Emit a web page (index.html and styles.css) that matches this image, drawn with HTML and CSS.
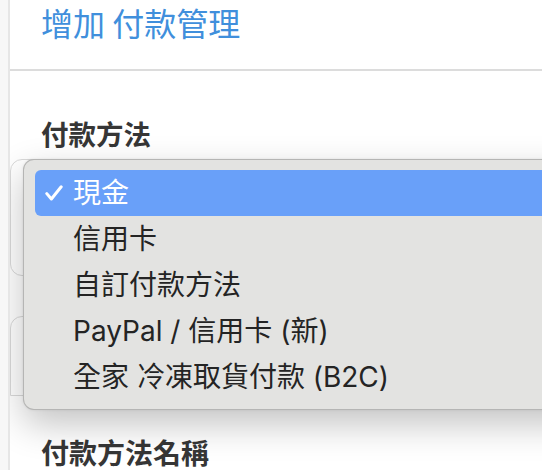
FILE: index.html
```html
<!DOCTYPE html>
<html lang="zh-Hant">
<head>
<meta charset="utf-8">
<title>增加 付款管理</title>
<link rel="stylesheet" href="styles.css">
</head>
<body>
<div class="panel">
  <div class="panel-head">
    <h1 class="title">增加 付款管理</h1>
  </div>
  <div class="panel-body">
    <div class="field-label">付款方法</div>
    <div class="box box-one"></div>
    <div class="box box-two"></div>
    <div class="field-label field-label-name">付款方法名稱</div>
  </div>
  <div class="menu">
    <div class="menu-item is-selected">
      <span class="check"><svg width="18" height="16" viewBox="0 0 18 16"><path d="M1.8 8.6 L6.4 14 L16.2 1.8" fill="none" stroke="#fff" stroke-width="3" stroke-linecap="round" stroke-linejoin="round"/></svg></span>
      <span class="label">現金</span>
    </div>
    <div class="menu-item"><span class="check"></span><span class="label">信用卡</span></div>
    <div class="menu-item"><span class="check"></span><span class="label">自訂付款方法</span></div>
    <div class="menu-item"><span class="check"></span><span class="label">PayPal / 信用卡 (新)</span></div>
    <div class="menu-item"><span class="check"></span><span class="label">全家 冷凍取貨付款 (B2C)</span></div>
  </div>
</div>
</body>
</html>
```

FILE: styles.css
```css
html, body {
  margin: 0;
  padding: 0;
  height: 470px;
  overflow: hidden;
}

body {
  background: #f7f7f7;
  font-family: Inter, "Noto Sans CJK TC", sans-serif;
}

.panel {
  position: relative;
  margin-left: 8px;
  border-left: 2px solid #e6e6e6;
  background: #ffffff;
  height: 470px;
  overflow: hidden;
}

.panel-head {
  height: 69px;
  border-bottom: 2px solid #dcdcdc;
  padding-left: 31px;
}

.title {
  margin: 0;
  font-family: "Noto Sans CJK TC", sans-serif;
  font-weight: 400;
  font-size: 32px;
  line-height: 44px;
  color: #408fdc;
}

.panel-body {
  display: flex;
  flex-direction: column;
}

.field-label {
  padding-left: 31px;
  margin-top: 44px;
  font-family: "Noto Sans CJK TC", sans-serif;
  font-weight: 700;
  font-size: 27.5px;
  line-height: 36px;
  color: #363636;
}

.box {
  border: 1px solid #dadada;
  margin-right: -40px;
}

.box-one {
  margin-top: 8px;
  height: 115px;
  border-radius: 12px;
}

.box-two {
  margin-top: 40px;
  height: 78px;
  border-radius: 12px 12px 0 0;
}

.field-label-name {
  margin-top: 38px;
  font-size: 28px;
}

.menu {
  position: absolute;
  left: 13px;
  top: 159px;
  width: 600px;
  height: 251px;
  box-sizing: border-box;
  padding: 10px 0 9px 11px;
  background: #e3e3e1;
  border: 1px solid rgba(0, 0, 0, 0.2);
  border-radius: 11px;
  box-shadow: 0 14px 36px rgba(0, 0, 0, 0.24), 0 0 3px rgba(0, 0, 0, 0.08);
}

.menu-item {
  display: flex;
  align-items: center;
  gap: 10px;
  height: 46px;
  padding-left: 10px;
  border-radius: 6px 0 0 6px;
  font-size: 28px;
  color: #242424;
}

.menu-item.is-selected {
  background: #69a0f9;
  color: #ffffff;
}

.check {
  width: 18px;
  height: 16px;
  display: flex;
}

.label {
  line-height: 46px;
  white-space: nowrap;
}
```
